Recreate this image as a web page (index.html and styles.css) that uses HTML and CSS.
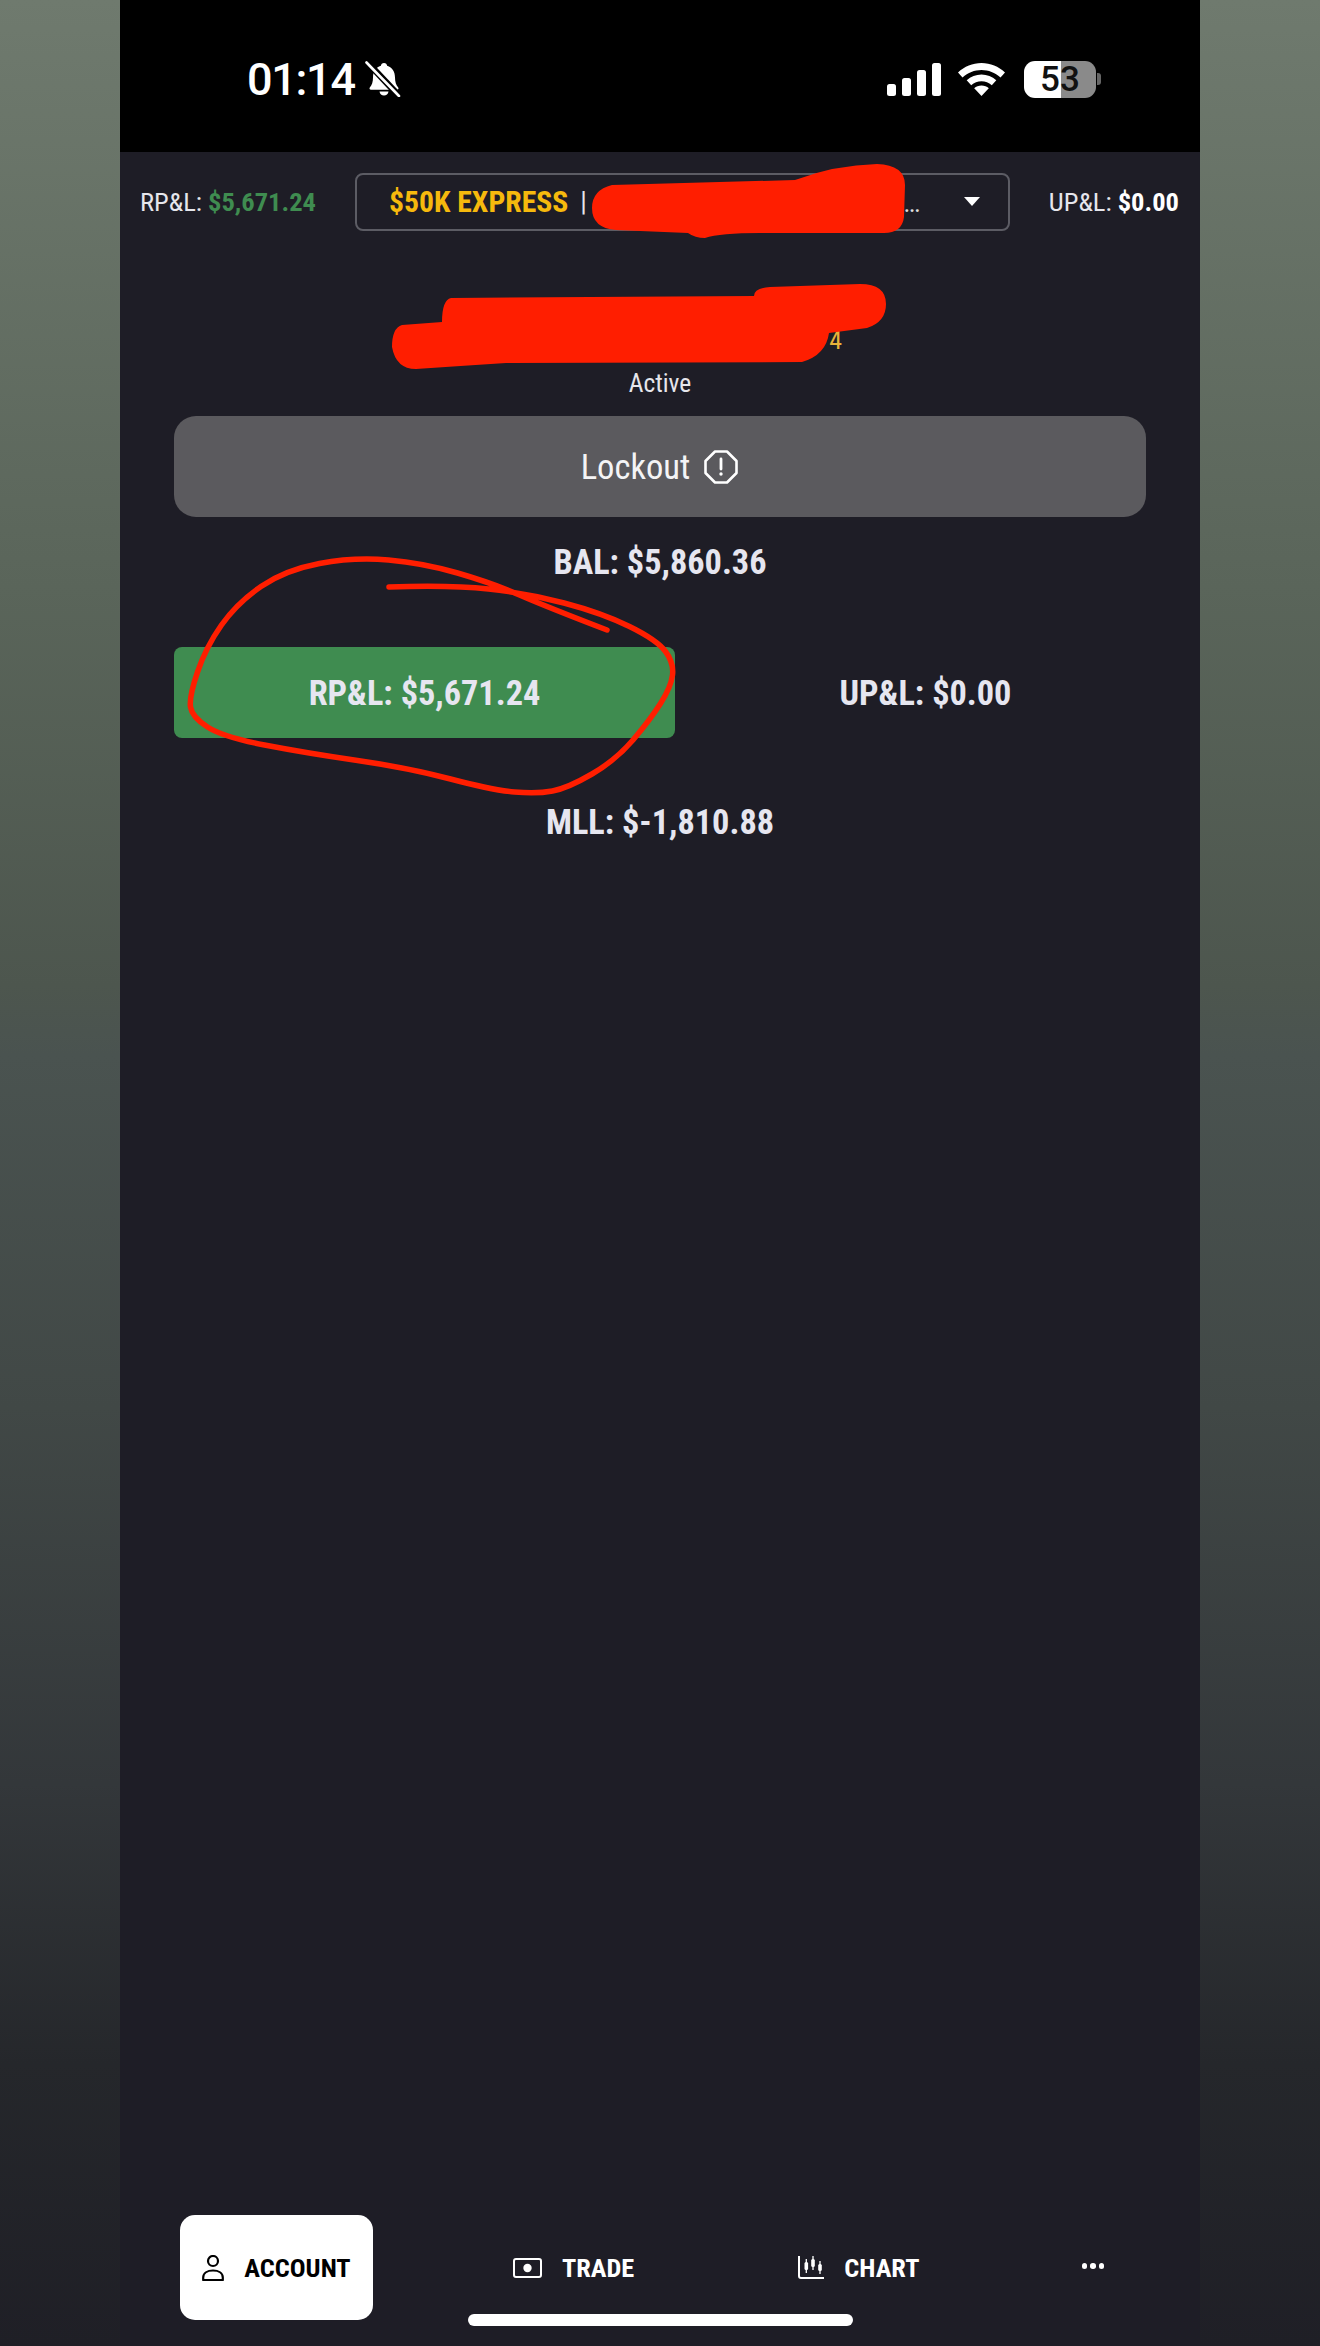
FILE: index.html
```html
<!DOCTYPE html>
<html lang="en">
<head>
<meta charset="utf-8">
<title>Account</title>
<link rel="stylesheet" href="styles.css">
</head>
<body>
<div class="stage">
  <div class="phone">
    <header class="status">
      <div class="status-left">
        <span class="clock">01:14</span>
        <svg class="bell" viewBox="0 0 36 36" width="36" height="36"><path d="M19 2c1.800 0 3 1.200 3.100 2.800C27.500 6.500 30 11 30 16.500c0 4.500 1 7.500 3.200 10 .7.900.2 2.300-1.200 2.300H6c-1.400 0-1.900-1.400-1.200-2.300C7 24 8 21 8 16.500 8 11 10.500 6.500 15.900 4.800 16 3.200 17.200 2 19 2zM14.500 30.500h9c-.3 2.400-2.200 4-4.500 4s-4.200-1.600-4.500-4z" fill="#fff"/><path d="M2 1 35 36" stroke="#000" stroke-width="6.500"/><path d="M1.500 1.500 34 35" stroke="#fff" stroke-width="2.600" stroke-linecap="round"/></svg>
      </div>
      <div class="status-right">
        <div class="signal"><i class="b1"></i><i class="b2"></i><i class="b3"></i><i class="b4"></i></div>
        <svg class="wifi" viewBox="0 0 47 33" width="47" height="33"><path d="M23.500 0C14.500 0 6.500 3.500 0 9.500l4.500 5C10 9.700 16.500 7 23.500 7s13.500 2.700 19 7.500l4.500-5C40.500 3.500 32.500 0 23.500 0z" fill="#fff"/><path d="M23.500 11.500c-5.500 0-10.700 2.100-14.800 5.800l4.500 5c3-2.700 6.400-4.100 10.300-4.100s7.300 1.400 10.300 4.100l4.500-5C34.200 13.600 29 11.500 23.500 11.500z" fill="#fff"/><path d="M23.500 22.500c-2.800 0-5.400 1-7.300 2.800L23.500 33l7.300-7.700c-1.900-1.800-4.500-2.800-7.300-2.800z" fill="#fff"/></svg>
        <div class="battery"><span class="battery-num">53</span></div>
        <span class="battery-cap"></span>
      </div>
    </header>

    <div class="topbar">
      <div class="pnl"><span>RP&amp;L:</span> <b class="pos">$5,671.24</b></div>
      <div class="selector">
        <span class="sel-name">$50K EXPRESS</span>
        <span class="sel-sep">|</span>
        <span class="sel-more">...</span>
        <span class="caret"></span>
      </div>
      <div class="pnl pnl-right"><span>UP&amp;L:</span> <b>$0.00</b></div>
    </div>

    <main class="account">
      <div class="acct-id"><span class="acct-tail">4</span></div>
      <div class="acct-state">Active</div>
      <button class="lockout">
        <span>Lockout</span>
        <svg viewBox="0 0 36 36" width="36" height="36"><path d="M12 2.500h12L33.500 12v12L24 33.500H12L2.500 24V12z" fill="none" stroke="#fff" stroke-width="2.600" stroke-linejoin="round"/><path d="M18 10v10" stroke="#fff" stroke-width="2.800" stroke-linecap="round"/><circle cx="18" cy="25" r="1.700" fill="#fff"/></svg>
      </button>
      <div class="metric bal">BAL: $5,860.36</div>
      <div class="pnl-row">
        <div class="metric tile pos-tile">RP&amp;L: $5,671.24</div>
        <div class="metric tile">UP&amp;L: $0.00</div>
      </div>
      <div class="metric mll">MLL: $-1,810.88</div>
    </main>

    <nav class="tabs">
      <div class="tab active">
        <svg viewBox="0 0 22 26" width="22" height="26"><circle cx="11" cy="6" r="5" fill="none" stroke="#000" stroke-width="2.200"/><path d="M1.200 25v-2.500c0-4.500 4.300-7 9.800-7s9.800 2.500 9.800 7V25z" fill="none" stroke="#000" stroke-width="2.200" stroke-linejoin="round"/></svg>
        <span>ACCOUNT</span>
      </div>
      <div class="tab trade">
        <svg viewBox="0 0 29 20" width="29" height="20"><rect x="1" y="1" width="27" height="18" rx="2" fill="none" stroke="#fff" stroke-width="2"/><circle cx="14.500" cy="10" r="4.200" fill="#fff"/></svg>
        <span>TRADE</span>
      </div>
      <div class="tab chart">
        <svg viewBox="0 0 26 23" width="26" height="23"><path d="M1 0v20a2 2 0 0 0 2 2h23" fill="none" stroke="#fff" stroke-width="2"/><path d="M8.300 3v14M15 0v14M22 5v13" stroke="#fff" stroke-width="1.300"/><rect x="6.500" y="6" width="3.600" height="8" rx="1.500" fill="#fff"/><rect x="13.200" y="3" width="3.600" height="8" rx="1.500" fill="#fff"/><rect x="20.200" y="8" width="3.600" height="7" rx="1.500" fill="#fff"/></svg>
        <span>CHART</span>
      </div>
      <div class="tab more"><i></i><i></i><i></i></div>
    </nav>
    <div class="home-bar"></div>

    <svg class="scribble" viewBox="0 0 1080 2346" width="1080" height="2346" aria-hidden="true">
      <path class="fill" d="M492 185L675 180Q715 165 757 164Q785 165 785 185L784 217Q782 233 764 233L640 233Q600 233 585 238Q575 238 568 233L496 230Q472 228 472 208Q472 190 492 185Z"/>
      <path class="fill" d="M331 298L634 296Q634 288 650 287L740 284Q766 284 766 304Q766 322 747 328L709 333Q706 355 682 362L386 363Q340 366 296 369Q276 369 272 347Q272 328 282 325L322 322Q322 300 331 298Z"/>
      <path class="line" d="M269 587Q331 585 368.500 589Q406 593 444 603Q482 613 509.500 626.500Q537 640 545.500 651.500Q554 663 552.500 675Q551 687 540.500 703.500Q530 720 513 740Q496 760 472 774Q448 788 432.500 791Q417 794 394.500 792Q372 790 330.500 779Q289 768 237.500 760.500Q186 753 144.500 745Q103 737 87.500 727Q72 717 70.500 707Q69 697 77.500 672Q86 647 101.500 625Q117 603 141 586.500Q165 570 199.500 563.500Q234 557 268.500 560Q303 563 337.500 573Q372 583 399.500 595Q427 607 487 630"/>
    </svg>
  </div>
</div>
</body>
</html>
```

FILE: styles.css
```css
* { box-sizing: border-box; }
html, body { margin: 0; padding: 0; }
body { background: #000; font-family: "Liberation Sans Narrow", "Roboto Condensed", "Roboto", sans-serif; }
.stage {
  width: 1320px;
  height: 2346px;
  display: flex;
  justify-content: center;
  background: linear-gradient(180deg, #6f7a6e 0%, #5a655a 25%, #4d564e 42%, #4a5350 45%, #414846 60%, #33373a 76%, #25272b 88%, #1f1f26 100%);
}
.phone {
  width: 1080px;
  height: 2346px;
  background: #1e1d26;
  position: relative;
  display: flex;
  flex-direction: column;
  overflow: hidden;
}
.status {
  height: 152px;
  background: #000;
  color: #fff;
  display: flex;
  justify-content: space-between;
  align-items: center;
  padding: 6px 99px 0 127px;
}
.status-left, .status-right { display: flex; align-items: center; }
.clock { font-family: "Roboto", sans-serif; font-size: 45px; font-weight: 500; letter-spacing: -1.300px; }
.bell { margin-left: 10px; }
.signal { display: flex; align-items: flex-end; gap: 6px; height: 33px; }
.signal i { display: block; width: 9px; background: #fff; border-radius: 2.500px; }
.b1 { height: 12px; } .b2 { height: 18px; } .b3 { height: 26px; } .b4 { height: 33px; }
.wifi { margin-left: 17px; }
.battery {
  margin-left: 19px;
  width: 72px;
  height: 37px;
  border-radius: 11px;
  background: linear-gradient(90deg, #fff 0 52%, #8a8a8a 52% 100%);
  display: flex;
  align-items: center;
  justify-content: center;
}
.battery-num { font-family: "Roboto", sans-serif; color: #111; font-size: 35px; font-weight: 500; line-height: 37px; }
.battery-cap { width: 4px; height: 12px; margin-left: 1px; background: #666; border-radius: 0 3px 3px 0; }

.topbar {
  height: 100px;
  display: grid;
  grid-template-columns: 215px 655px 1fr;
  align-items: center;
  padding: 0 21px 1px 20px;
}
.pnl { color: #e6e6ec; font-size: 26.500px; white-space: nowrap; }
.pnl b { color: #fff; font-weight: 700; }
.pnl .pos { color: #3f8c50; }
.pnl-right { justify-self: end; }
.selector {
  height: 58px;
  border: 2px solid #5c5c64;
  border-radius: 8px;
  display: flex;
  align-items: center;
  padding: 0 28px 0 32px;
  color: #fff;
}
.sel-name { color: #f6b90d; font-size: 29.700px; font-weight: 700; }
.sel-sep { margin-left: 12px; font-size: 27px; color: #e6e6ec; }
.sel-more { margin-left: auto; font-size: 18px; font-weight: 700; color: #ddd; padding-top: 8px; }
.caret {
  margin-left: 44px;
  border-left: 8.500px solid transparent;
  border-right: 8.500px solid transparent;
  border-top: 9px solid #fff;
}

.account { flex: 1; display: flex; flex-direction: column; align-items: center; padding: 0 54px; }
.acct-id { width: 100%; height: 114px; display: flex; justify-content: flex-end; align-items: flex-end; padding: 0 304px 11px 0; }
.acct-tail { color: #e8b23a; font-size: 26px; line-height: 30px; }
.acct-state { color: #e6e6ec; font-size: 25.500px; height: 34px; line-height: 34px; }
.lockout {
  width: 100%;
  flex: none;
  height: 101px;
  margin-top: 16px;
  background: #5b5a5e;
  border: 0;
  border-radius: 22px;
  display: flex;
  align-items: center;
  justify-content: center;
  gap: 13px;
  color: #f4f4f6;
  font: inherit;
  font-size: 34.600px;
}
.metric { color: #e6e6f0; font-size: 34.300px; font-weight: 700; white-space: nowrap; }
.bal { margin-top: 25px; height: 40px; line-height: 40px; }
.pnl-row { width: 100%; display: flex; margin-top: 65px; }
.tile { flex: 0 0 501px; height: 91px; display: flex; align-items: center; justify-content: center; border-radius: 8px; }
.pos-tile { background: #3f8c50; color: #e6e6f0; }
.mll { margin-top: 64px; height: 40px; line-height: 40px; }

.tabs { height: 134px; display: flex; padding-top: 3px; }
.tab {
  display: flex;
  align-items: center;
  justify-content: center;
  gap: 20px;
  height: 105px;
  color: #fff;
  font-size: 26.300px;
  font-weight: 700;
}
.tab.active { background: #fff; color: #000; width: 193px; margin-left: 60px; border-radius: 15px; }
.tab.trade { margin-left: 140px; }
.tab.chart { margin-left: 164px; }
.tab.more { margin-left: 162px; padding-bottom: 3px; gap: 3px; }
.tab.more i { width: 5.500px; height: 5.500px; border-radius: 50%; background: #fff; display: block; }
.home-bar { position: absolute; left: 348px; top: 2314px; width: 385px; height: 12px; border-radius: 6px; background: #fff; }
.scribble { position: absolute; left: 0; top: 0; pointer-events: none; }
.scribble .fill { fill: #ff1e00; }
.scribble .line { fill: none; stroke: #ff1e00; stroke-width: 5.500px; stroke-linecap: round; stroke-linejoin: round; }
```
